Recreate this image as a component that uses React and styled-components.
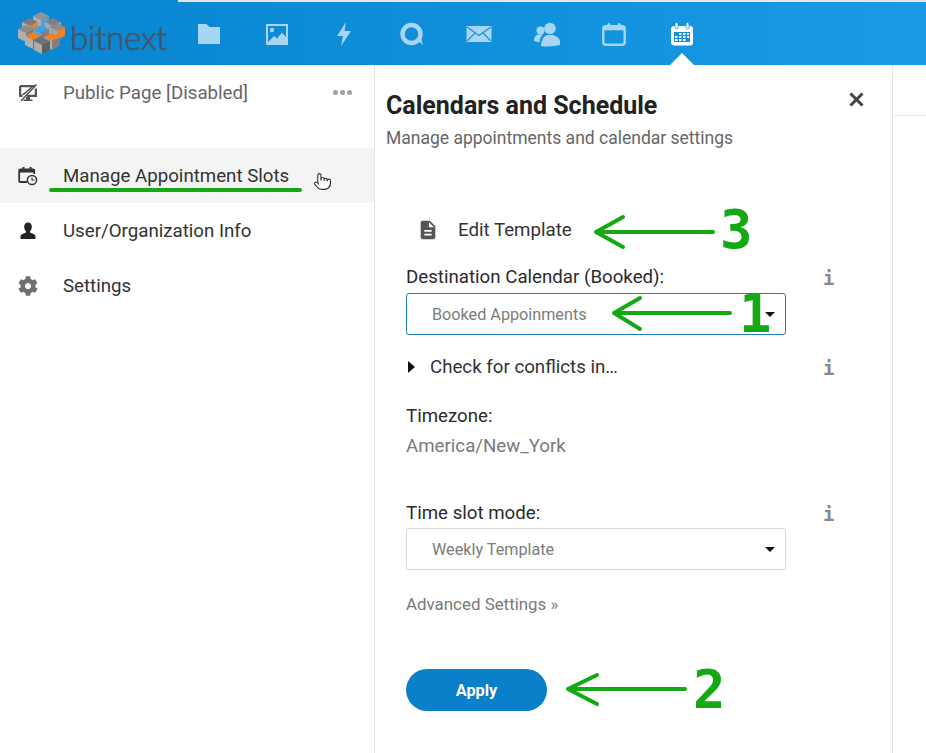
import styled, { createGlobalStyle } from "styled-components";
import { FaCog } from "react-icons/fa";
import { MdDescription } from "react-icons/md";
import { Pointer } from "lucide-react";

const GlobalStyle = createGlobalStyle`
  html, body {
    margin: 0;
    padding: 0;
    background: #fff;
    font-family: Roboto, "Liberation Sans", sans-serif;
  }
`;

const Page = styled.div`
  position: relative;
  width: 926px;
  height: 753px;
  overflow: hidden;
  background: #fff;
`;

const TopBar = styled.header`
  display: flex;
  height: 65px;
  background: #0a88d4;
`;

const LogoCell = styled.div`
  width: 178px;
  display: flex;
  align-items: center;
  padding-left: 18px;
  box-sizing: border-box;
  gap: 5px;
`;

const LogoText = styled.span`
  font-family: Lato, "Open Sans", sans-serif;
  font-weight: 300;
  font-size: 33px;
  letter-spacing: -0.2px;
  color: #46566a;
  margin-top: 8px;
  -webkit-text-stroke: 0.7px #46566a;
`;

const Nav = styled.nav`
  flex: 1;
  display: flex;
  align-items: center;
  gap: 43.5px;
  padding-left: 19px;
  box-sizing: border-box;
  border-top: 2px solid #e4e8ea;
  background: linear-gradient(90deg, #0a88d4, #1a9ae4);
`;

const NavItem = styled.div`
  position: relative;
  width: 24px;
  height: 24px;
  color: ${(p) => (p.$active ? "#fff" : "#a8d5f4")};

  svg {
    display: block;
    width: 24px;
    height: 24px;
    overflow: visible;
  }

  ${(p) =>
    p.$active &&
    `&::after {
      content: "";
      position: absolute;
      left: 0;
      top: 31.5px;
      border-left: 12px solid transparent;
      border-right: 12px solid transparent;
      border-bottom: 12px solid #fff;
    }`}
`;

const Body = styled.div`
  display: flex;
  height: 688px;
`;

const Sidebar = styled.aside`
  width: 375px;
  box-sizing: border-box;
  border-right: 1px solid #e6e6e6;
`;

const SideRow = styled.div`
  height: 55px;
  display: flex;
  align-items: center;
  padding-left: 18px;
  font-size: 18.7px;
  color: ${(p) => p.$color || "#333"};
  background: ${(p) => (p.$active ? "#f4f4f4" : "transparent")};
  margin-bottom: ${(p) => (p.$spaced ? "28px" : "0")};
  box-sizing: border-box;
`;

const SideIcon = styled.span`
  width: 20px;
  height: 20px;
  margin-right: 25px;
  display: flex;
  align-items: center;
  justify-content: center;
  color: ${(p) => p.$color || "#333"};

  svg {
    display: block;
  }
`;

const SideLabel = styled.span`
  flex: 1;
`;

const Dots = styled.span`
  display: flex;
  gap: 2px;
  margin-right: 22px;

  i {
    width: 5px;
    height: 5px;
    border-radius: 50%;
    background: #a0a0a0;
  }
`;

const HandCursor = styled.span`
  margin-right: 42px;
  margin-top: 11px;
  display: flex;
  color: #333;
`;

const Panel = styled.main`
  width: 518px;
  box-sizing: border-box;
  border-right: 1px solid #e6e6e6;
  padding: 26px 0 0 11px;
  position: relative;
`;

const Title = styled.h1`
  margin: 0;
  font-size: 25px;
  line-height: 30px;
  font-weight: 700;
  color: #222;
`;

const Subtitle = styled.p`
  margin: 2px 0 0;
  font-size: 17.5px;
  line-height: 30px;
  color: #666;
`;

const CloseButton = styled.svg`
  position: absolute;
  left: 474px;
  top: 27px;
  width: 15px;
  height: 15px;
  color: #444;
`;

const Form = styled.div`
  width: 380px;
  margin-left: 20px;
  display: flex;
  flex-direction: column;
`;

const EditRow = styled.div`
  display: flex;
  align-items: center;
  height: 30px;
  margin-top: 62px;
  font-size: 18.7px;
  color: #333;

  svg {
    margin-left: 11px;
    margin-right: 19px;
    color: #555;
  }
`;

const Label = styled.div`
  position: relative;
  font-size: 18.7px;
  line-height: 24px;
  color: #2b2b2b;
  margin-top: ${(p) => p.$top || 0}px;
`;

const InfoMark = styled.span`
  position: absolute;
  left: 417px;
  top: 1px;
  font-family: "DejaVu Sans Mono", monospace;
  font-weight: 700;
  font-size: 19px;
  line-height: 24px;
  color: #8a8a8a;
`;

const Select = styled.div`
  height: 42px;
  box-sizing: border-box;
  margin-top: ${(p) => p.$top || 0}px;
  border: 1px solid ${(p) => (p.$focus ? "#1f7fb8" : "#d8d8d8")};
  border-radius: 3px;
  display: flex;
  align-items: center;
  justify-content: space-between;
  padding: 0 10px 0 25px;
  font-size: 16.2px;
  color: #7c7c7c;
`;

const Caret = styled.i`
  width: 0;
  height: 0;
  border-left: 5px solid transparent;
  border-right: 5px solid transparent;
  border-top: 5px solid #111;
`;

const Disclosure = styled.div`
  position: relative;
  display: flex;
  align-items: center;
  gap: 15px;
  height: 24px;
  margin-top: 20px;
  font-size: 18.7px;
  color: #333;

  i {
    margin-left: 2px;
    width: 0;
    height: 0;
    border-top: 6px solid transparent;
    border-bottom: 6px solid transparent;
    border-left: 7px solid #111;
  }
`;

const ValueText = styled.div`
  font-size: 18.7px;
  line-height: 24px;
  color: #7a7a7a;
  margin-top: 6px;
`;

const AdvancedLink = styled.div`
  font-size: 16.9px;
  line-height: 24px;
  color: #7a7a7a;
  margin-top: 22px;
`;

const ApplyButton = styled.button`
  width: 141px;
  height: 42px;
  margin-top: 53px;
  border: none;
  border-radius: 21px;
  background: #0a7fca;
  color: #fff;
  font-family: inherit;
  font-size: 16.3px;
  font-weight: 700;
  padding: 0;
`;

const RightColumn = styled.div`
  flex: 1;
  height: 50px;
  border-bottom: 1px solid #e6e6e6;
`;

const Markup = styled.svg`
  position: absolute;
  left: 0;
  top: 0;
  width: 926px;
  height: 753px;
  pointer-events: none;
`;

const Digit = styled.span`
  position: absolute;
  left: ${(p) => p.$x}px;
  top: ${(p) => p.$y}px;
  font-family: "DejaVu Sans Mono", monospace;
  font-weight: 700;
  font-size: 54px;
  line-height: 54px;
  color: #14a814;
`;

function Logo() {
  const cube = (x, y, top, left, right) => (
    <g key={`${x}-${y}`} transform={`translate(${x} ${y})`}>
      <polygon points="0,4 8,0 16,4 8,8" fill={top} />
      <polygon points="0,4 8,8 8,17 0,13" fill={left} />
      <polygon points="16,4 8,8 8,17 16,13" fill={right} />
    </g>
  );
  return (
    <svg width="47" height="42" viewBox="0 0 47 42">
      {cube(15, 0, "#949494", "#b0b0b0", "#5b9fd0")}
      {cube(4, 6, "#7c7c7c", "#b0b0b0", "#f08020")}
      {cube(27, 6, "#7a8088", "#ababab", "#a6a6a6")}
      {cube(0, 13, "#8a8a8a", "#b0b0b0", "#777")}
      {cube(31, 11, "#8a8a8a", "#a6a6a6", "#f08020")}
      {cube(15, 13, "#3fa0e0", "#4aa8e4", "#808080")}
      {cube(7, 20, "#f08020", "#b0b0b0", "#747474")}
      {cube(26, 21, "#f08020", "#b0b0b0", "#808080")}
      {cube(16, 25, "#707070", "#adadad", "#5f5f5f")}
    </svg>
  );
}

const FolderIcon = () => (
  <svg viewBox="0 0 24 24" fill="currentColor">
    <path d="M1 2h8.500l3 3H23v17H1z" />
  </svg>
);

const ImageIcon = () => (
  <svg viewBox="0 0 24 24">
    <path fill="currentColor" fillRule="evenodd" d="M1 2h22v21H1zM3 4v17h18V4z" />
    <circle cx="7" cy="8" r="2.200" fill="currentColor" />
    <path fill="currentColor" d="M3 20l6-6 3 2.500 5-6 4 4.500v6H3z" />
  </svg>
);

const BoltIcon = () => (
  <svg viewBox="0 0 24 24" fill="currentColor">
    <path d="M14 0L5 14h6l-2 10 10-15h-6.500z" />
  </svg>
);

const ChatIcon = () => (
  <svg viewBox="0 0 24 24" fill="none">
    <circle cx="11.500" cy="12" r="9" stroke="currentColor" strokeWidth="4.400" />
    <path d="M17 18l6 5-2-7z" fill="currentColor" />
  </svg>
);

const MailIcon = () => (
  <svg viewBox="1 0 24 24" fill="none">
    <rect x="0.500" y="4" width="25" height="16" fill="currentColor" />
    <path d="M1 5l12 8.500 12-8.500M1 19l8.500-8.500M25 19l-8.500-8.500" stroke="#1492dc" strokeWidth="1.100" />
  </svg>
);

const UsersIcon = () => (
  <svg viewBox="1 0 24 24" fill="currentColor">
    <circle cx="16" cy="6.500" r="5.800" />
    <path d="M7 24c0-6 3-10 6-11h6c3 1 7 3 7 7v3c-3 1-16 2-19 1z" />
    <circle cx="6.500" cy="8.500" r="4" />
    <path d="M0 19c0-4 2-6 4-6.500h5c-2 2-3.500 4-3.500 8z" />
  </svg>
);

const CalendarIcon = () => (
  <svg viewBox="0 0 24 24" fill="none">
    <rect x="1.300" y="4.300" width="21.400" height="18.400" rx="2.500" stroke="currentColor" strokeWidth="2.400" />
    <rect x="1.300" y="4.300" width="21.400" height="4" fill="currentColor" />
    <rect x="5.500" y="1" width="2.600" height="6" rx="1.300" fill="currentColor" />
    <rect x="15.900" y="1" width="2.600" height="6" rx="1.300" fill="currentColor" />
  </svg>
);

const CalendarGridIcon = () => (
  <svg viewBox="0 0 24 24">
    <rect x="1" y="4" width="22" height="19.500" rx="3" fill="currentColor" />
    <rect x="5" y="0.500" width="3" height="6.500" rx="1.500" fill="currentColor" stroke="#1492dc" strokeWidth="0.800" />
    <rect x="16" y="0.500" width="3" height="6.500" rx="1.500" fill="currentColor" stroke="#1492dc" strokeWidth="0.800" />
    <path fill="#1492dc" d="M4 10h16v10H4z" />
    <path fill="#fff" d="M9 11h2.500v2H9zM13 11h2.500v2H13zM17 11h2v2h-2zM5 14h2.500v2H5zM9 14h2.500v2H9zM13 14h2.500v2H13zM17 14h2v2h-2zM5 17h2.500v2H5zM9 17h2.500v2H9zM13 17h2.500v2H13z" />
  </svg>
);

const MonitorOffIcon = () => (
  <svg width="20" height="20" viewBox="0 0 20 20" fill="none">
    <path stroke="#555" strokeWidth="2.200" d="M2.100 3.100h14.800M2.100 3v9.900h2.500M17.900 5.500v7.400H9" />
    <path fill="#555" d="M3.500 12L13 4h2L6 12z" />
    <path stroke="#555" strokeWidth="1.600" d="M3 18L18.500 1.500" />
    <path fill="#555" d="M8 14h4v2.500h2.500V18H5.500v-1.500H8z" />
  </svg>
);

const CalendarClockIcon = () => (
  <svg width="20" height="20" viewBox="0 0 20 20" fill="none">
    <path stroke="#333" strokeWidth="1.800" d="M9 16H2.200a1 1 0 0 1-1-1V4.500a1 1 0 0 1 1-1h13a1 1 0 0 1 1 1V8" />
    <path fill="#333" d="M1 3.500h16v3H1zM4.500 1h2v4h-2zM11.500 1h2v4h-2z" />
    <circle cx="14" cy="14" r="4.600" stroke="#333" strokeWidth="1.500" fill="#f4f4f4" />
    <path stroke="#333" strokeWidth="1.200" d="M14 11.500V14h2.400" />
  </svg>
);

const UserIcon = () => (
  <svg width="18" height="18" viewBox="0 0 18 18" fill="#222">
    <path d="M9 0.500c2.500 0 3.800 1.800 3.800 4.200 0 2-.8 3.500-1.800 4.500v1.300c2 .8 5.500 1.600 5.500 4.300V17H1.500v-2.200c0-2.700 3.500-3.500 5.500-4.300V9.200c-1-1-1.800-2.500-1.800-4.500C5.200 2.300 6.500.5 9 .5z" />
  </svg>
);

const navIcons = [
  FolderIcon,
  ImageIcon,
  BoltIcon,
  ChatIcon,
  MailIcon,
  UsersIcon,
  CalendarIcon,
  CalendarGridIcon,
];

export default function App() {
  return (
    <Page>
      <GlobalStyle />
      <TopBar>
        <LogoCell>
          <Logo />
          <LogoText>bitnext</LogoText>
        </LogoCell>
        <Nav>
          {navIcons.map((Icon, i) => (
            <NavItem key={i} $active={i === navIcons.length - 1}>
              <Icon />
            </NavItem>
          ))}
        </Nav>
      </TopBar>
      <Body>
        <Sidebar>
          <SideRow $color="#666" $spaced>
            <SideIcon>
              <MonitorOffIcon />
            </SideIcon>
            <SideLabel>Public Page [Disabled]</SideLabel>
            <Dots>
              <i />
              <i />
              <i />
            </Dots>
          </SideRow>
          <SideRow $active>
            <SideIcon>
              <CalendarClockIcon />
            </SideIcon>
            <SideLabel>Manage Appointment Slots</SideLabel>
            <HandCursor>
              <Pointer size={19} fill="#fff" strokeWidth={1.4} />
            </HandCursor>
          </SideRow>
          <SideRow>
            <SideIcon>
              <UserIcon />
            </SideIcon>
            <SideLabel>User/Organization Info</SideLabel>
          </SideRow>
          <SideRow>
            <SideIcon $color="#6e6e6e">
              <FaCog size={20} />
            </SideIcon>
            <SideLabel>Settings</SideLabel>
          </SideRow>
        </Sidebar>
        <Panel>
          <Title>Calendars and Schedule</Title>
          <Subtitle>Manage appointments and calendar settings</Subtitle>
          <CloseButton viewBox="0 0 15 15">
            <path d="M1.500 1.500l12 12M13.500 1.500l-12 12" stroke="currentColor" strokeWidth="3" />
          </CloseButton>
          <Form>
            <EditRow>
              <MdDescription size={22} />
              Edit Template
            </EditRow>
            <Label $top={20}>
              Destination Calendar (Booked):
              <InfoMark>i</InfoMark>
            </Label>
            <Select $top={4} $focus>
              Booked Appoinments
              <Caret />
            </Select>
            <Disclosure>
              <i />
              Check for conflicts in…
              <InfoMark>i</InfoMark>
            </Disclosure>
            <Label $top={25}>Timezone:</Label>
            <ValueText>America/New_York</ValueText>
            <Label $top={43}>
              Time slot mode:
              <InfoMark>i</InfoMark>
            </Label>
            <Select $top={3}>
              Weekly Template
              <Caret />
            </Select>
            <AdvancedLink>Advanced Settings »</AdvancedLink>
            <ApplyButton>Apply</ApplyButton>
          </Form>
        </Panel>
        <RightColumn />
      </Body>
      <Markup viewBox="0 0 926 753" fill="none" stroke="#14a814" strokeLinecap="round" strokeLinejoin="round">
        <path d="M51 190H300" strokeWidth="4" />
        <path d="M713 232H596M623 217L596 232L623 247" strokeWidth="4" />
        <path d="M730 313H614M640 298L614 313L640 329" strokeWidth="4" />
        <path d="M685 689H568M597 675L568 689L597 704" strokeWidth="4" />
      </Markup>
      <Digit $x={720} $y={203}>3</Digit>
      <Digit $x={739} $y={287}>1</Digit>
      <Digit $x={693} $y={663}>2</Digit>
    </Page>
  );
}
